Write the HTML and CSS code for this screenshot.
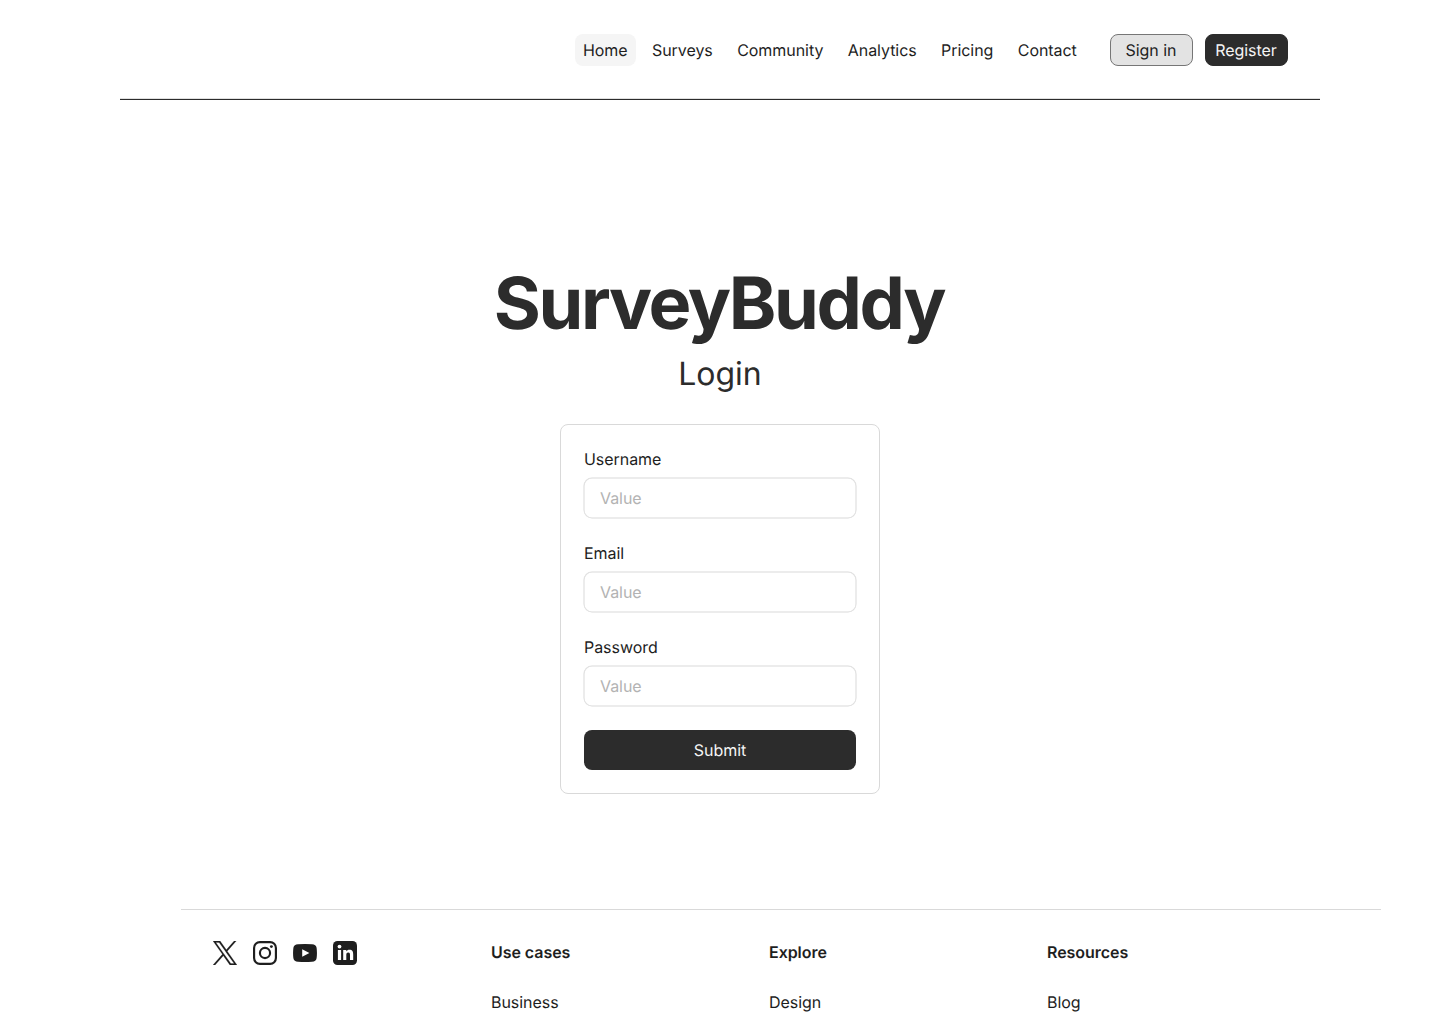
FILE: index.html
```html
<!DOCTYPE html>
<html lang="en">
<head>
<meta charset="utf-8">
<title>SurveyBuddy – Login</title>
<link rel="stylesheet" href="styles.css">
</head>
<body>
<header class="header">
  <nav class="nav">
    <a class="nav-link nav-link-active">Home</a>
    <a class="nav-link">Surveys</a>
    <a class="nav-link">Community</a>
    <a class="nav-link">Analytics</a>
    <a class="nav-link">Pricing</a>
    <a class="nav-link">Contact</a>
  </nav>
  <div class="auth">
    <button class="button button-neutral">Sign in</button>
    <button class="button button-primary">Register</button>
  </div>
</header>
<main class="hero">
  <div class="heading">
    <h1 class="title">SurveyBuddy</h1>
    <p class="subtitle">Login</p>
  </div>
  <form class="form">
    <label class="field">Username<input class="input" type="text" placeholder="Value"></label>
    <label class="field">Email<input class="input" type="email" placeholder="Value"></label>
    <label class="field">Password<input class="input" type="password" placeholder="Value"></label>
    <button class="submit" type="button">Submit</button>
  </form>
</main>
<footer class="footer">
  <div class="social">
    <svg class="icon" viewBox="0 0 24 24"><path fill="currentColor" stroke="currentColor" stroke-width=".2" d="M14.283 10.162 23.218 0h-2.117l-7.758 8.824L7.147 0H0l9.37 13.343L0 24h2.117l8.193-9.319L16.853 24H24zM11.383 13.461l-.949-1.328L2.88 1.559h3.252l6.096 8.534.95 1.328 7.924 11.09H17.85z"/></svg>
    <svg class="icon" viewBox="0 0 24 24" fill="none" stroke="currentColor" stroke-width="2.16"><rect x="1.08" y="1.08" width="21.84" height="21.84" rx="5.8"/><circle cx="12" cy="12" r="5.08"/><circle cx="18.4" cy="5.6" r="1.44" fill="currentColor" stroke="none"/></svg>
    <svg class="icon" viewBox="0 0 24 24"><path fill="currentColor" fill-rule="evenodd" d="M5 3.3Q12 2.7 19 3.3Q23 3.5 23.6 6.8Q24.3 12 23.6 17.2Q23 20.5 19 20.7Q12 21.3 5 20.7Q1 20.5 .4 17.2Q-.3 12 .4 6.8Q1 3.5 5 3.3ZM9.2 8.2v7.6l7.2-3.8z"/></svg>
    <svg class="icon" viewBox="0 0 24 24"><rect width="24" height="24" rx="4.5" fill="currentColor"/><g fill="#fff"><circle cx="6.5" cy="5.6" r="1.9"/><path d="M4.9 9h3.2v10H4.9zM10.2 9h3.1v1.4c.6-1 1.7-1.6 3.1-1.6 3.1 0 3.8 2 3.8 4.7V19H17v-4.9c0-1.3-.1-2.6-1.8-2.6s-1.9 1.3-1.9 2.6V19h-3.1z"/></g></svg>
  </div>
  <div class="column"><h2 class="column-title">Use cases</h2><a>Business</a></div>
  <div class="column"><h2 class="column-title">Explore</h2><a>Design</a></div>
  <div class="column"><h2 class="column-title">Resources</h2><a>Blog</a></div>
</footer>
</body>
</html>
```
FILE: styles.css
```css
* { box-sizing: border-box; }

body {
  display: flex;
  flex-direction: column;
  height: 1024px;
  margin: 0;
  overflow: hidden;
  background: #fff;
  color: #1e1e1e;
  font: 400 16px/22px Inter, sans-serif;
  letter-spacing: -0.05px;
  text-rendering: geometricPrecision;
}

.header {
  display: flex;
  flex: none;
  align-items: center;
  justify-content: flex-end;
  gap: 25.2px;
  width: 1200px;
  height: 100px;
  margin: 0 auto;
  padding: 0 32px;
  border-bottom: 1px solid #2c2c2c;
  box-shadow: inset 0 -1px #e0e0e0;
}

.nav { display: flex; gap: 8.4px; }

.nav-link {
  padding: 8px;
  border-radius: 8px;
  line-height: 16px;
}

.nav-link-active { background: #f5f5f5; }

.auth { display: flex; gap: 12px; }

.button {
  width: 83px;
  height: 32px;
  padding: 0 1px 0 0;
  border: 1px solid #2c2c2c;
  border-radius: 8px;
  font: inherit;
  line-height: 16px;
  letter-spacing: inherit;
  text-rendering: inherit;
}

.button-neutral { border-color: #767676; background: #e3e3e3; color: #1e1e1e; }
.button-primary { background: #2c2c2c; color: #f5f5f5; }

.hero {
  display: flex;
  flex: none;
  flex-direction: column;
  align-items: center;
  gap: 32px;
  height: 809px;
  padding-top: 161px;
}

.heading {
  display: flex;
  flex-direction: column;
  align-items: center;
  gap: 8px;
  height: 131px;
  color: #2c2c2c;
}

.title {
  margin: 0;
  padding-right: 2px;
  font-size: 72px;
  font-weight: 700;
  line-height: 86px;
  letter-spacing: -0.033em;
}

.subtitle { margin: 0; font-size: 32px; line-height: 38px; }

.form {
  display: flex;
  flex-direction: column;
  gap: 24px;
  width: 320px;
  padding: 23px;
  border: 1px solid #d9d9d9;
  border-radius: 8px;
}

.field { display: flex; flex-direction: column; gap: 8px; }

.input {
  width: 100%;
  height: 40px;
  padding: 0 16px;
  border: 0;
  border-radius: 8px;
  box-shadow: 0 0 0 0.5px #d9d9d9, inset 0 0 0 0.5px #d9d9d9;
  background: #fff;
  font: inherit;
  letter-spacing: inherit;
  text-rendering: inherit;
}

.input::placeholder { color: #b3b3b3; }

.submit {
  height: 40px;
  border: 0;
  border-radius: 8px;
  background: #2c2c2c;
  color: #f5f5f5;
  font: inherit;
  letter-spacing: inherit;
  text-rendering: inherit;
}

.footer {
  display: grid;
  flex: none;
  grid-template-columns: repeat(4, 262px);
  gap: 16px;
  width: 1200px;
  margin-left: 181px;
  padding: 31px 32px;
  border-top: 1px solid #d9d9d9;
}

.social { display: flex; gap: 16px; }
.icon { width: 24px; height: 24px; }
.column { display: flex; flex-direction: column; gap: 28px; }
.column-title { margin: 0; font-size: 16px; font-weight: 600; line-height: 22px; }
```
